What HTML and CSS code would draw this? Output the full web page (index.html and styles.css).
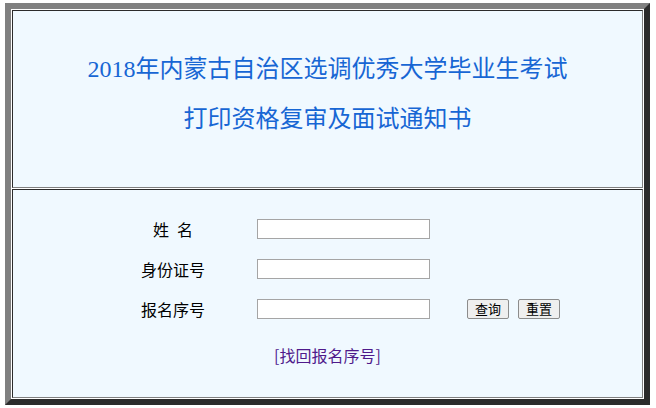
FILE: index.html
```html
<!DOCTYPE html>
<html>
<head>
    <meta charset="utf-8">
    <title>打印资格复审及面试通知书</title>
    <link rel="stylesheet" href="styles.css">
</head>
<body>
    <div class="frame">
        <div class="cell head">
            <div class="title">2018年内蒙古自治区选调优秀大学毕业生考试</div>
            <div class="title">打印资格复审及面试通知书</div>
        </div>
        <div class="cell query">
            <form class="query-form">
                <label class="label" for="name">姓&ensp;名</label>
                <input type="text" id="name">
                <span></span>

                <label class="label" for="idcard">身份证号</label>
                <input type="text" id="idcard">
                <span></span>

                <label class="label" for="regno">报名序号</label>
                <input type="text" id="regno">
                <div class="buttons">
                    <button type="submit">查询</button>
                    <button type="reset">重置</button>
                </div>
            </form>
            <div class="find">
                <a href="#">[找回报名序号]</a>
            </div>
        </div>
    </div>
</body>
</html>
```

FILE: styles.css
```css
body {
    margin: 3px 0 0 5px;
    background: #fff;
    font-family: "Noto Sans CJK SC", sans-serif;
    color: #000;
}
.frame {
    width: 645px;
    box-sizing: border-box;
    border: 6px solid;
    border-color: #808080 #2b2b2b #2b2b2b #808080;
    padding: 1px;
    display: flex;
    flex-direction: column;
    gap: 1px;
    background: #fff;
}
.cell {
    box-sizing: border-box;
    border: 1px solid;
    border-color: #2b2b2b #808080 #808080 #2b2b2b;
    background: #f0f9ff;
}
.head {
    height: 178px;
    padding-top: 33px;
}
.title {
    font-family: "Liberation Serif", "Noto Sans CJK SC", serif;
    font-size: 24px;
    line-height: 50px;
    text-align: center;
    color: #1766d4;
}
.query {
    height: 209px;
    padding-top: 29px;
}
.query-form {
    margin: 0 0 0 109px;
    display: grid;
    grid-template-columns: 135px 210px auto;
    grid-auto-rows: 20px;
    row-gap: 20px;
    align-items: center;
}
.label {
    padding-right: 33px;
    text-align: center;
    font-size: 16px;
    line-height: 20px;
}
.query-form input {
    width: 173px;
    height: 20px;
    box-sizing: border-box;
    margin: 0;
    border: 1px solid #a5a5a5;
    background: #fff;
}
.buttons {
    display: flex;
    gap: 9px;
}
.buttons button {
    width: 42px;
    height: 20px;
    padding: 0;
    margin: 0;
    font-family: "Noto Sans CJK SC", sans-serif;
    font-size: 13px;
    line-height: 18px;
    color: #000;
    background: #efefef;
    border: 1px solid #8c8c8c;
    border-radius: 2px;
}
.find {
    margin-top: 26px;
    text-align: center;
    font-size: 16px;
    line-height: 20px;
}
.find a {
    color: #4f1a8b;
    text-decoration: none;
}
```
